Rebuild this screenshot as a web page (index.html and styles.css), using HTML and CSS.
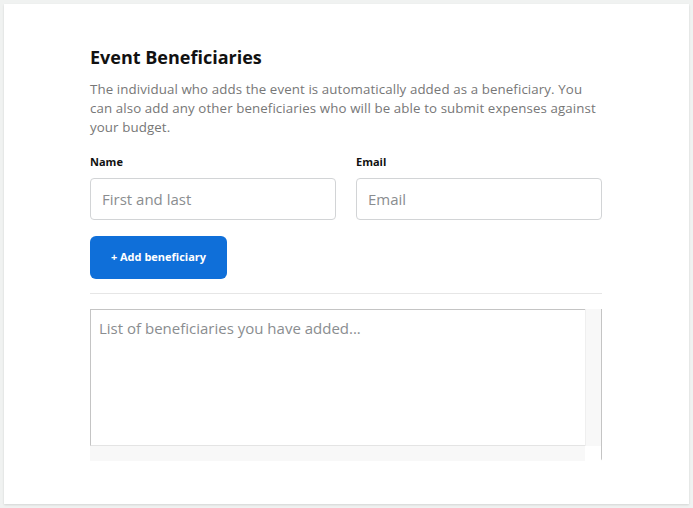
FILE: index.html
```html
<!DOCTYPE html>
<html lang="en">
<head>
<meta charset="utf-8">
<title>Event Beneficiaries</title>
<link rel="stylesheet" href="styles.css">
</head>
<body>
<main class="card">
  <h1 class="title">Event Beneficiaries</h1>
  <p class="intro">The individual who adds the event is automatically added as a beneficiary. You can also add any other beneficiaries who will be able to submit expenses against your budget.</p>
  <div class="fields">
    <label class="field">
      <span class="label">Name</span>
      <input class="input" type="text" placeholder="First and last">
    </label>
    <label class="field">
      <span class="label">Email</span>
      <input class="input" type="email" placeholder="Email">
    </label>
  </div>
  <button class="add-btn" type="button">+ Add beneficiary</button>
  <hr class="divider">
  <div class="list-box">
    <textarea class="list" placeholder="List of beneficiaries you have added..."></textarea>
    <div class="track-v"></div>
    <div class="track-h"></div>
    <div class="corner"></div>
  </div>
</main>
</body>
</html>
```
FILE: styles.css
```css
* { box-sizing: border-box; }
html, body { margin: 0; }
body {
  background: #f0f2f1;
  padding: 4px;
  font-family: "Open Sans", "Noto Sans", sans-serif;
}
.card {
  background: #fff;
  width: 685px;
  height: 500px;
  padding: 41px 87px 0 86px;
  box-shadow: 0 1px 2px rgba(0,0,0,0.12);
}
.title {
  margin: 0;
  font-size: 18px;
  line-height: 24px;
  font-weight: 700;
  color: #111;
}
.intro {
  margin: 11px 0 0;
  font-size: 13.3px;
  line-height: 19px;
  letter-spacing: 0.1px;
  color: #777;
}
.fields {
  display: grid;
  grid-template-columns: 1fr 1fr;
  gap: 20px;
  margin-top: 18px;
}
.field { display: flex; flex-direction: column; }
.label {
  font-size: 11px;
  line-height: 14px;
  font-weight: 700;
  color: #111;
  margin-bottom: 9px;
}
.input {
  height: 42px;
  border: 1px solid #d2d4d6;
  border-radius: 4px;
  padding: 0 11px;
  font-family: inherit;
  font-size: 15px;
  color: #333;
  outline: none;
}
.input::placeholder { color: #8a8d90; }
.add-btn {
  display: block;
  margin-top: 16px;
  width: 137px;
  height: 43px;
  padding: 0 0 3px;
  border: 0;
  border-radius: 6px;
  background: #0f6fd9;
  color: #fff;
  font-family: inherit;
  font-size: 11px;
  font-weight: 700;
}
.divider {
  margin: 14px 0 15px;
  border: 0;
  border-top: 1px solid #e6e6e6;
  height: 0;
}
.list-box {
  display: grid;
  grid-template-columns: 1fr 16px;
  grid-template-rows: 137px 15px;
  height: 152px;
  border-right: 1px solid #c4c4c4;
  border-bottom: 1px solid #e2e2e2;
  border-bottom-right-radius: 3px;
}
.list {
  resize: none;
  overflow: hidden;
  border: 0;
  border-left: 1px solid #c4c4c4;
  border-top: 1px solid #c4c4c4;
  border-bottom: 1px solid #e4e4e4;
  padding: 7px 8px;
  font-family: inherit;
  font-size: 15px;
  line-height: 22px;
  outline: none;
}
.list::placeholder { color: #8a8d90; }
.track-v { background: #f8f8f8; border-left: 1px solid #efefef; }
.track-h { background: #f8f8f8; }
.corner { background: #fff; }
```
